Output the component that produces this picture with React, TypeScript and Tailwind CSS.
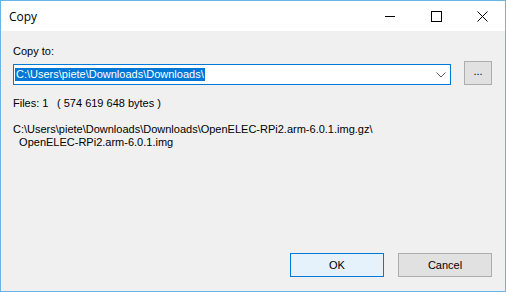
import React from 'react';

const font = { fontFamily: '"Liberation Sans", Arial, sans-serif' };

const App: React.FC = () => {
  return (
    <div className="w-[506px] h-[292px] flex flex-col border border-[#66b6ea] bg-white text-black" style={font}>
      {/* Title bar */}
      <div className="h-[30px] flex items-center bg-white">
        <span className="pl-[8px] text-[12px] leading-none pt-[1px]" style={{ fontFamily: '"Open Sans", "Noto Sans", sans-serif' }}>
          Copy
        </span>
        <div className="ml-auto flex h-full">
          <button className="w-[46px] h-full flex items-center justify-center" aria-label="Minimize">
            <svg width="11" height="11" viewBox="0 0 11 11">
              <path d="M0 5.5h10" stroke="#000" strokeWidth="1" shapeRendering="crispEdges" />
            </svg>
          </button>
          <button className="w-[46px] h-full flex items-center justify-center" aria-label="Maximize">
            <svg width="11" height="11" viewBox="0 0 11 11">
              <rect x="0.5" y="0.5" width="10" height="10" fill="none" stroke="#000" strokeWidth="1" shapeRendering="crispEdges" />
            </svg>
          </button>
          <button className="w-[46px] h-full flex items-center justify-center" aria-label="Close">
            <svg width="11" height="11" viewBox="0 0 11 11">
              <path d="M0.5 0.5l10 10M10.5 0.5l-10 10" stroke="#000" strokeWidth="1" />
            </svg>
          </button>
        </div>
      </div>

      {/* Body */}
      <div className="flex-1 flex flex-col bg-[#f0f0f0] pl-[12px] pr-[13px] pt-[14px] pb-[14px] text-[11px] leading-[13px]">
        <div>Copy to:</div>

        <div className="mt-[3px] flex items-end gap-[13px]">
          <div className="w-[438px] h-[21px] flex items-center bg-white border border-[#0078d7] pl-[1px]">
            <span className="bg-[#0078d7] text-white h-[13px] leading-[13px] pl-[1px] pr-[1px]">
              C:\Users\piete\Downloads\Downloads\
            </span>
            <svg className="ml-auto mr-[4px]" width="10" height="6" viewBox="0 0 10 6">
              <path d="M0.5 0.5l4.5 4.5 4.5-4.5" fill="none" stroke="#606060" strokeWidth="1" />
            </svg>
          </div>
          <button className="w-[28px] h-[24px] flex items-center justify-center bg-[#e1e1e1] border border-[#adadad] pb-[3px]">
            ...
          </button>
        </div>

        <div className="mt-[12px] flex">
          <span className="w-[44px]">Files: 1</span>
          <span>( 574 619 648 bytes )</span>
        </div>

        <div className="mt-[13px] whitespace-pre">
          <div>C:\Users\piete\Downloads\Downloads\OpenELEC-RPi2.arm-6.0.1.img.gz\</div>
          <div>  OpenELEC-RPi2.arm-6.0.1.img</div>
        </div>

        <div className="mt-auto flex justify-end gap-[14px]">
          <button className="w-[94px] h-[24px] flex items-center justify-center bg-[#e5f1fb] border border-[#0078d7]">
            OK
          </button>
          <button className="w-[94px] h-[24px] flex items-center justify-center bg-[#e1e1e1] border border-[#adadad]">
            Cancel
          </button>
        </div>
      </div>
    </div>
  );
};

export default App;
